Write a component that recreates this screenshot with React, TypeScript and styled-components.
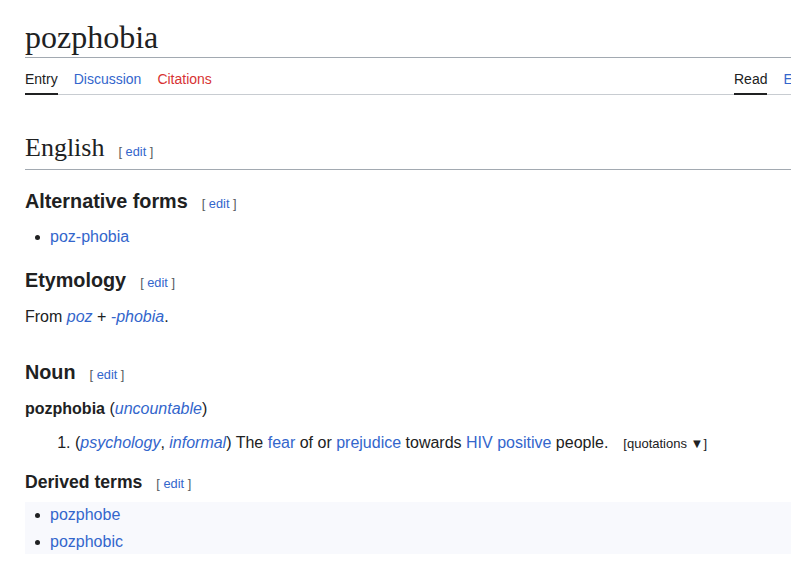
import React from "react";
import styled, { createGlobalStyle } from "styled-components";

const Global = createGlobalStyle`
  html, body { margin: 0; padding: 0; background: #fff; overflow: hidden; }
  body { font-family: "Liberation Sans", Arial, sans-serif; color: #202122; }
  * { box-sizing: border-box; }
`;

const Page = styled.div`
  width: 900px;
  padding-left: 25px;
`;

const Title = styled.h1`
  margin: 17px 0 0;
  font-family: "Liberation Serif", "Times New Roman", serif;
  font-weight: normal;
  font-size: 32px;
  line-height: 40px;
  border-bottom: 1px solid #a2a9b1;
`;

const TabBar = styled.nav`
  display: grid;
  grid-template-columns: 709px auto;
  border-bottom: 1px solid #c8ccd1;
  white-space: nowrap;
`;

const TabGroup = styled.div`
  display: flex;
  gap: 16px;
`;

const Tab = styled.a<{ $active?: boolean; $tone?: "blue" | "red" }>`
  display: block;
  padding: 13px 0 6px;
  font-size: 14px;
  line-height: 16px;
  text-decoration: none;
  white-space: nowrap;
  color: ${(p) => (p.$active ? "#202122" : p.$tone === "red" ? "#d73333" : "#3366cc")};
  border-bottom: 2px solid ${(p) => (p.$active ? "#202122" : "transparent")};
  margin-bottom: -1px;
`;

const LangHeading = styled.h2`
  margin: 36px 0 0;
  padding-bottom: 0;
  font-family: "Liberation Serif", "Times New Roman", serif;
  font-weight: normal;
  font-size: 26px;
  line-height: 34px;
  border-bottom: 1px solid #a2a9b1;
  display: flex;
  align-items: baseline;
`;

const SectionHeading = styled.h3<{ $mt: number; $size?: number; $lh?: number }>`
  margin: ${(p) => p.$mt}px 0 0;
  font-weight: bold;
  font-size: ${(p) => p.$size ?? 19.8}px;
  line-height: ${(p) => p.$lh ?? 25}px;
  display: flex;
  align-items: baseline;
`;

const EditLink = styled.span`
  margin-left: 14px;
  font-family: "Liberation Sans", Arial, sans-serif;
  font-weight: normal;
  font-size: 12.8px;
  color: #54595d;
  a { color: #3366cc; text-decoration: none; }
`;

const Para = styled.p<{ $mt: number }>`
  margin: ${(p) => p.$mt}px 0 0;
  font-size: 16px;
  line-height: 22px;
`;

const Link = styled.a<{ $italic?: boolean }>`
  color: #3366cc;
  text-decoration: none;
  font-style: ${(p) => (p.$italic ? "italic" : "normal")};
`;

const BulletList = styled.ul<{ $mt: number; $boxed?: boolean }>`
  list-style: none;
  margin: ${(p) => p.$mt}px 0 0;
  padding: ${(p) => (p.$boxed ? "2px 0 1px 25px" : "0 0 0 25px")};
  background: ${(p) => (p.$boxed ? "#f8f9fd" : "transparent")};
`;

const BulletItem = styled.li`
  position: relative;
  font-size: 16px;
  line-height: 22px;
  & + & { margin-top: 5px; }
  &::before {
    content: "";
    position: absolute;
    left: -15px;
    top: 9px;
    width: 5px;
    height: 5px;
    border-radius: 50%;
    background: #202122;
  }
`;

const SenseList = styled.ol`
  margin: 11.5px 0 0;
  padding-left: 50px;
  font-size: 16px;
  line-height: 22px;
`;

const Quotations = styled.span`
  margin-left: 15px;
  font-size: 13px;
  color: #202122;
`;

function Edit() {
  return (
    <EditLink>
      [ <a href="#">edit</a> ]
    </EditLink>
  );
}

export default function App() {
  return (
    <>
      <Global />
      <Page>
        <Title>pozphobia</Title>
        <TabBar>
          <TabGroup>
            <Tab $active>Entry</Tab>
            <Tab>Discussion</Tab>
            <Tab $tone="red">Citations</Tab>
          </TabGroup>
          <TabGroup>
            <Tab $active>Read</Tab>
            <Tab>Edit</Tab>
            <Tab>View history</Tab>
          </TabGroup>
        </TabBar>

        <LangHeading>
          English <Edit />
        </LangHeading>

        <SectionHeading $mt={19}>
          Alternative forms <Edit />
        </SectionHeading>
        <BulletList $mt={9.5}>
          <BulletItem>
            <Link href="#">poz-phobia</Link>
          </BulletItem>
        </BulletList>

        <SectionHeading $mt={20}>
          Etymology <Edit />
        </SectionHeading>
        <Para $mt={11}>
          From <Link $italic href="#">poz</Link> + <Link $italic href="#">-phobia</Link>.
        </Para>

        <SectionHeading $mt={32}>
          Noun <Edit />
        </SectionHeading>
        <Para $mt={11.5}>
          <b>pozphobia</b> (<Link $italic href="#">uncountable</Link>)
        </Para>
        <SenseList>
          <li>
            (<Link $italic href="#">psychology</Link>, <Link $italic href="#">informal</Link>) The{" "}
            <Link href="#">fear</Link> of or <Link href="#">prejudice</Link> towards{" "}
            <Link href="#">HIV positive</Link> people.
            <Quotations>[quotations ▼]</Quotations>
          </li>
        </SenseList>

        <SectionHeading $mt={16.5} $size={17.6} $lh={22}>
          Derived terms <Edit />
        </SectionHeading>
        <BulletList $mt={7} $boxed>
          <BulletItem>
            <Link href="#">pozphobe</Link>
          </BulletItem>
          <BulletItem>
            <Link href="#">pozphobic</Link>
          </BulletItem>
        </BulletList>
      </Page>
    </>
  );
}
